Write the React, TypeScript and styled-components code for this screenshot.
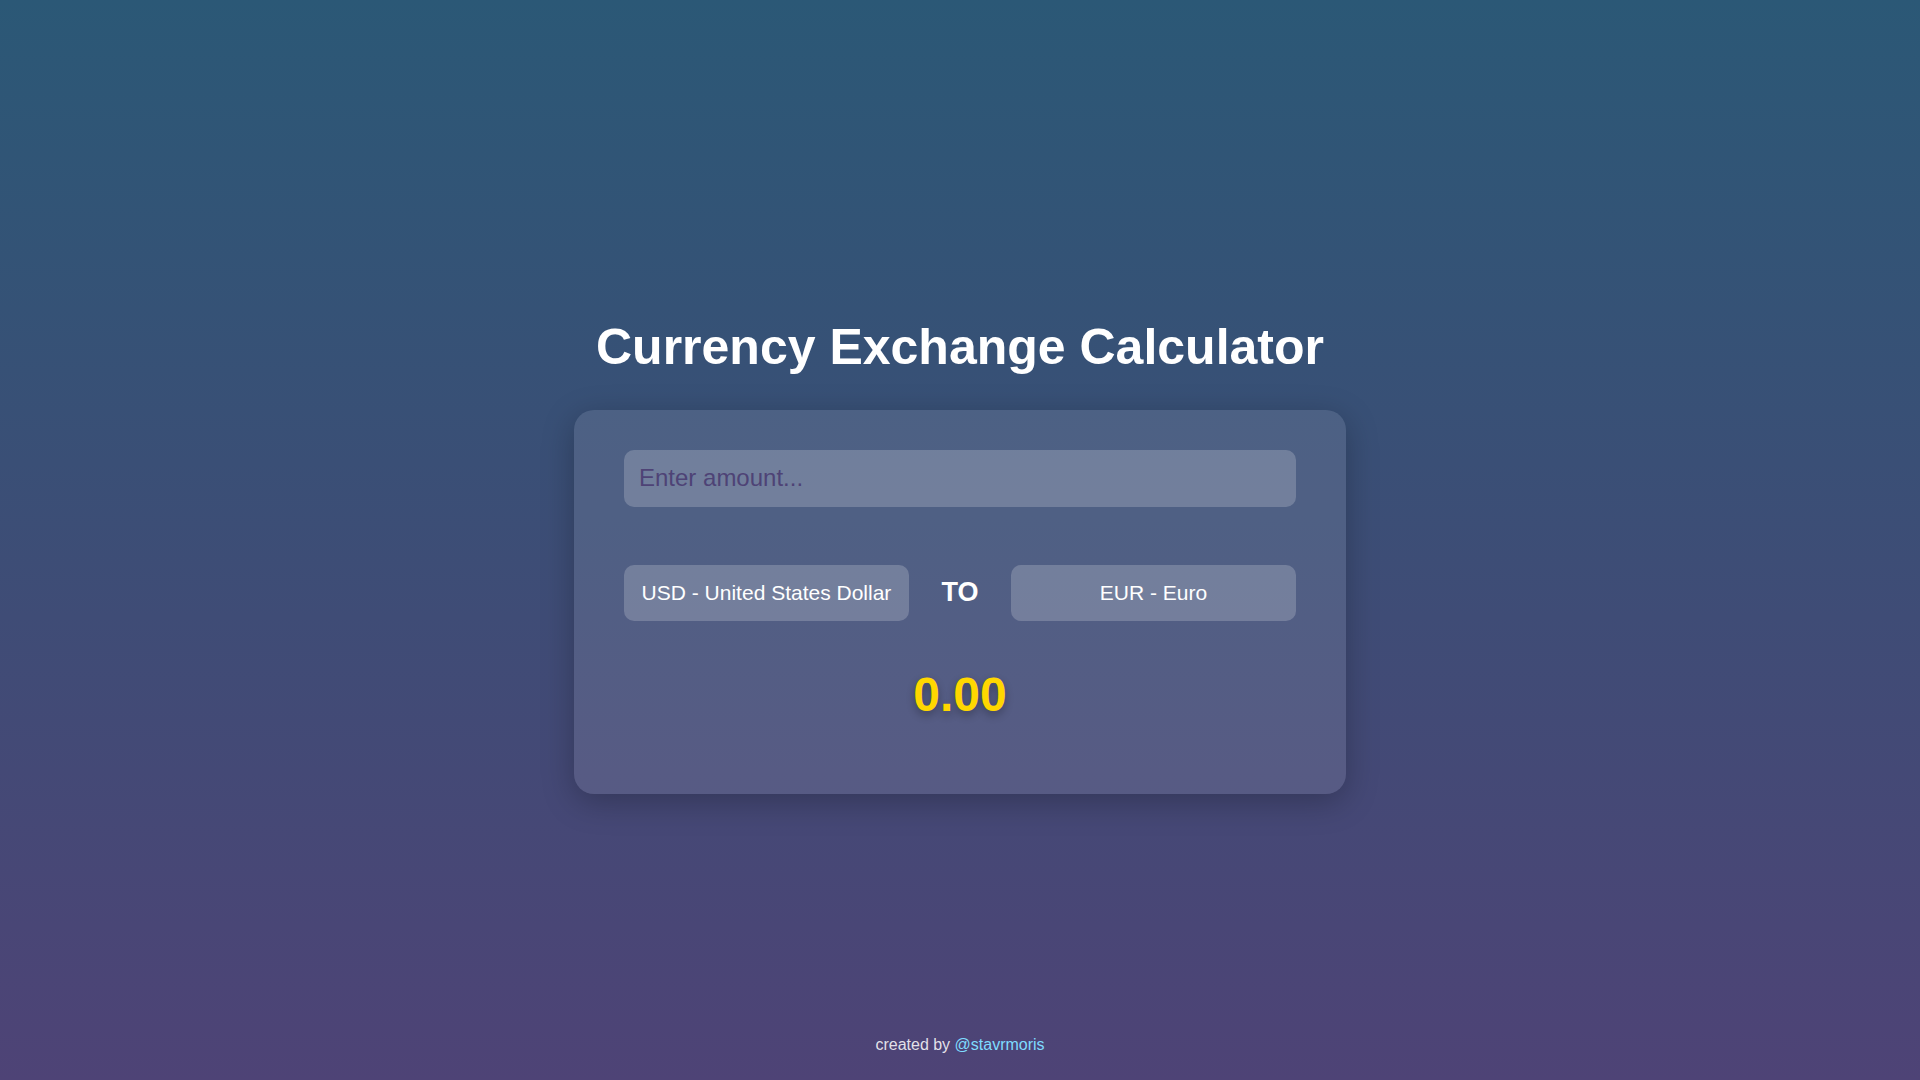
import React, { useState } from "react";
import styled, { createGlobalStyle } from "styled-components";

const GlobalStyle = createGlobalStyle`
  * { box-sizing: border-box; }
  html, body {
    margin: 0;
    padding: 0;
    height: 100%;
  }
  body {
    font-family: "Liberation Sans", Arial, sans-serif;
    background: linear-gradient(to bottom, #2b5876, #4e4376);
    background-attachment: fixed;
    color: #ffffff;
  }
`;

const Page = styled.div`
  min-height: 100vh;
  display: flex;
  flex-direction: column;
`;

const Main = styled.main`
  flex: 1;
  display: flex;
  flex-direction: column;
  align-items: center;
  justify-content: center;
  padding-top: 75px;
`;

const Title = styled.h1`
  margin: 0 0 34px;
  font-size: 50px;
  font-weight: 700;
  line-height: normal;
  color: #ffffff;
`;

const Card = styled.section`
  width: 772px;
  padding: 40px 50px 40px;
  background: rgba(255, 255, 255, 0.1);
  border-radius: 20px;
  box-shadow: 0 8px 32px rgba(0, 0, 0, 0.25);
  display: flex;
  flex-direction: column;
`;

const AmountInput = styled.input`
  width: 100%;
  height: 57px;
  padding: 0 15px;
  border: none;
  outline: none;
  border-radius: 10px;
  background: rgba(255, 255, 255, 0.2);
  font-family: "Liberation Sans", Arial, sans-serif;
  font-size: 24px;
  color: #ffffff;

  &::placeholder {
    color: #4e4376;
  }
`;

const Row = styled.div`
  margin-top: 58px;
  display: flex;
  align-items: center;
  justify-content: space-between;
`;

const Select = styled.select`
  width: 285px;
  height: 56px;
  padding: 0 10px;
  border: none;
  outline: none;
  border-radius: 10px;
  background: rgba(255, 255, 255, 0.2);
  color: #ffffff;
  font-family: "Liberation Sans", Arial, sans-serif;
  font-size: 21px;
  text-align: center;
  text-align-last: center;
  appearance: none;
  -webkit-appearance: none;
  cursor: pointer;

  option {
    color: #222;
  }
`;

const To = styled.span`
  font-size: 27px;
  font-weight: 700;
  color: #ffffff;
`;

const Result = styled.div`
  margin: 46px 0 32px;
  text-align: center;
  font-size: 48px;
  line-height: 55px;
  font-weight: 700;
  color: #ffd700;
  text-shadow: 0 4px 8px rgba(0, 0, 0, 0.3);
`;

const Footer = styled.footer`
  padding: 0 0 26px;
  text-align: center;
  font-size: 16px;
  line-height: 18px;
  color: rgba(255, 255, 255, 0.85);
`;

const Link = styled.a`
  color: #7fdcff;
  text-decoration: none;
`;

const currencies = [
  { code: "USD", name: "United States Dollar" },
  { code: "EUR", name: "Euro" },
  { code: "GBP", name: "British Pound" },
  { code: "JPY", name: "Japanese Yen" },
];

export default function App() {
  const [amount, setAmount] = useState("");
  const [from, setFrom] = useState("USD");
  const [to, setTo] = useState("EUR");

  return (
    <>
      <GlobalStyle />
      <Page>
        <Main>
          <Title>Currency Exchange Calculator</Title>
          <Card>
            <AmountInput
              type="text"
              placeholder="Enter amount..."
              value={amount}
              onChange={(e) => setAmount(e.target.value)}
            />
            <Row>
              <Select value={from} onChange={(e) => setFrom(e.target.value)}>
                {currencies.map((c) => (
                  <option key={c.code} value={c.code}>
                    {c.code} - {c.name}
                  </option>
                ))}
              </Select>
              <To>TO</To>
              <Select value={to} onChange={(e) => setTo(e.target.value)}>
                {currencies.map((c) => (
                  <option key={c.code} value={c.code}>
                    {c.code} - {c.name}
                  </option>
                ))}
              </Select>
            </Row>
            <Result>0.00</Result>
          </Card>
        </Main>
        <Footer>
          created by <Link href="#">@stavrmoris</Link>
        </Footer>
      </Page>
    </>
  );
}
